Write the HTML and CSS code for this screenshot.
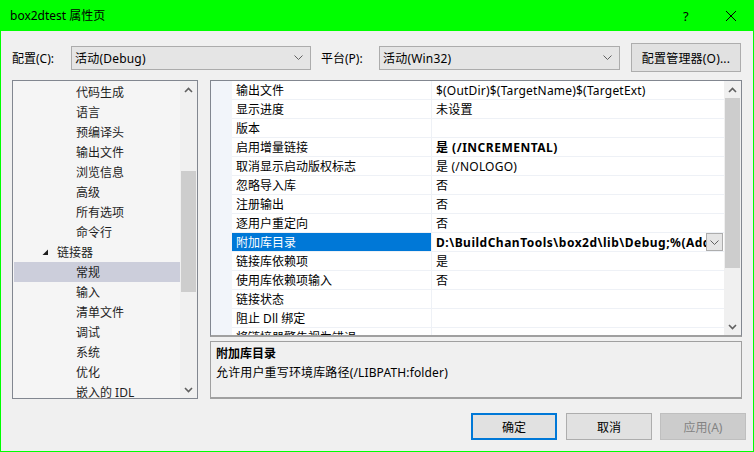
FILE: index.html
```html
<!DOCTYPE html>
<html lang="zh-CN">
<head>
<meta charset="utf-8">
<title>box2dtest 属性页</title>
<link rel="stylesheet" href="styles.css">
</head>
<body>
<div class="window">
  <div class="titlebar">
    <span class="title">box2dtest 属性页</span>
    <span class="help">?</span>
    <span class="close"><svg width="12" height="12" viewBox="0 0 12 12"><path d="M1 1L11 11M11 1L1 11" stroke="#000" stroke-width="1" fill="none"/></svg></span>
  </div>

  <div class="toolbar">
    <span class="label lab1">配置(C):</span>
    <div class="combo combo1"><span>活动(Debug)</span><svg class="chev" width="9" height="5" viewBox="0 0 9 5"><path d="M0.5 0.5L4.5 4.5L8.5 0.5" stroke="#606060" fill="none"/></svg></div>
    <span class="label lab2">平台(P):</span>
    <div class="combo combo2"><span>活动(Win32)</span><svg class="chev" width="9" height="5" viewBox="0 0 9 5"><path d="M0.5 0.5L4.5 4.5L8.5 0.5" stroke="#606060" fill="none"/></svg></div>
    <button class="btn mgr">配置管理器(O)...</button>
  </div>

  <div class="main">
    <div class="tree">
      <ul class="tree-list">
        <li class="child">代码生成</li>
        <li class="child">语言</li>
        <li class="child">预编译头</li>
        <li class="child">输出文件</li>
        <li class="child">浏览信息</li>
        <li class="child">高级</li>
        <li class="child">所有选项</li>
        <li class="child">命令行</li>
        <li class="parent"><svg class="expander" width="7" height="7" viewBox="0 0 7 7"><path d="M6 0.5V6H0.5Z" fill="#1e1e1e"/></svg>链接器</li>
        <li class="child selected">常规</li>
        <li class="child">输入</li>
        <li class="child">清单文件</li>
        <li class="child">调试</li>
        <li class="child">系统</li>
        <li class="child">优化</li>
        <li class="child">嵌入的 IDL</li>
      </ul>
      <div class="vscroll tree-scroll">
        <div class="sbtn"><svg width="9" height="6" viewBox="0 0 9 6"><path d="M1 5L4.5 1.5L8 5" stroke="#606060" stroke-width="1.6" fill="none"/></svg></div>
        <div class="gap-a"></div>
        <div class="thumb"></div>
        <div class="fill"></div>
        <div class="sbtn"><svg width="9" height="6" viewBox="0 0 9 6"><path d="M1 1L4.5 4.5L8 1" stroke="#606060" stroke-width="1.6" fill="none"/></svg></div>
      </div>
    </div>

    <div class="right">
      <div class="grid">
        <div class="grid-rows">
          <div class="row"><div class="gutter"></div><div class="name">输出文件</div><div class="val">$(OutDir)$(TargetName)$(TargetExt)</div></div>
          <div class="row"><div class="gutter"></div><div class="name">显示进度</div><div class="val">未设置</div></div>
          <div class="row"><div class="gutter"></div><div class="name">版本</div><div class="val"></div></div>
          <div class="row"><div class="gutter"></div><div class="name">启用增量链接</div><div class="val bold">是 (/INCREMENTAL)</div></div>
          <div class="row"><div class="gutter"></div><div class="name">取消显示启动版权标志</div><div class="val">是 (/NOLOGO)</div></div>
          <div class="row"><div class="gutter"></div><div class="name">忽略导入库</div><div class="val">否</div></div>
          <div class="row"><div class="gutter"></div><div class="name">注册输出</div><div class="val">否</div></div>
          <div class="row"><div class="gutter"></div><div class="name">逐用户重定向</div><div class="val">否</div></div>
          <div class="row active"><div class="gutter"></div><div class="name">附加库目录</div><div class="val bold"><span class="clip">D:\BuildChanTools\box2d\lib\Debug;%(AdditionalLibraryDirectories)</span><span class="ddbtn"><svg width="9" height="5" viewBox="0 0 9 5"><path d="M0.5 0.5L4.5 4.5L8.5 0.5" stroke="#606060" fill="none"/></svg></span></div></div>
          <div class="row"><div class="gutter"></div><div class="name">链接库依赖项</div><div class="val">是</div></div>
          <div class="row"><div class="gutter"></div><div class="name">使用库依赖项输入</div><div class="val">否</div></div>
          <div class="row"><div class="gutter"></div><div class="name">链接状态</div><div class="val"></div></div>
          <div class="row"><div class="gutter"></div><div class="name">阻止 Dll 绑定</div><div class="val"></div></div>
          <div class="row"><div class="gutter"></div><div class="name">将链接器警告视为错误</div><div class="val"></div></div>
        </div>
        <div class="vscroll grid-scroll">
          <div class="sbtn"><svg width="9" height="6" viewBox="0 0 9 6"><path d="M1 5L4.5 1.5L8 5" stroke="#606060" stroke-width="1.6" fill="none"/></svg></div>
          <div class="thumb"></div>
          <div class="fill"></div>
          <div class="sbtn"><svg width="9" height="6" viewBox="0 0 9 6"><path d="M1 1L4.5 4.5L8 1" stroke="#606060" stroke-width="1.6" fill="none"/></svg></div>
        </div>
      </div>
      <div class="desc">
        <div class="desc-title">附加库目录</div>
        <div class="desc-text">允许用户重写环境库路径(/LIBPATH:folder)</div>
      </div>
    </div>
  </div>

  <div class="actions">
    <button class="btn act default">确定</button>
    <button class="btn act">取消</button>
    <button class="btn act disabled">应用(A)</button>
  </div>
</div>
</body>
</html>
```

FILE: styles.css
```css
* { box-sizing: border-box; }
html, body { margin: 0; padding: 0; }
body {
  width: 754px;
  height: 452px;
  overflow: hidden;
  font-family: "Noto Sans", "Noto Sans CJK SC", sans-serif;
  font-size: 12px;
  color: #000;
}
.window {
  width: 754px;
  height: 452px;
  background: #f0f0f0;
  border: 1px solid #00ff00;
  border-top: 0;
  display: flex;
  flex-direction: column;
}
.titlebar {
  height: 31px;
  background: #00ff00;
  display: flex;
  align-items: center;
  flex: none;
}
.title {
  margin-left: 9px;
  font-size: 12px;
  line-height: 16px;
  flex: 1;
}
.help {
  font-size: 13px;
  width: 12px;
  margin-right: 30px;
}
.close {
  width: 12px;
  height: 12px;
  margin-right: 16px;
  display: flex;
}

.toolbar {
  display: flex;
  align-items: center;
  margin-top: 12px;
  padding-left: 11px;
  height: 29px;
  flex: none;
}
.label { line-height: 16px; padding-top: 2px; white-space: nowrap; }
.lab1 { width: 59px; }
.lab2 { width: 58px; margin-left: 10px; }
.combo {
  height: 24px;
  background: #e5e5e5;
  border: 1px solid #acacac;
  display: flex;
  align-items: center;
  padding-left: 3px;
  padding-right: 7px;
}
.combo span { flex: 1; line-height: 16px; padding-top: 2px; letter-spacing: 0.2px; }
.combo1 { width: 240px; }
.combo2 { width: 241px; }
.chev { display: block; }
.btn {
  font-family: inherit;
  font-size: 12px;
  color: #000;
  background: #e1e1e1;
  border: 1px solid #adadad;
  padding: 1px 0 0;
  margin: 0;
}
.mgr {
  width: 110px;
  height: 29px;
  margin-left: 11px;
  letter-spacing: 0.2px;
}

.main {
  display: flex;
  margin-top: 8px;
  padding-left: 11px;
  gap: 12px;
  height: 319px;
  flex: none;
}
.tree {
  width: 186px;
  height: 319px;
  border: 1px solid #828790;
  background: #f5f5f5;
  display: flex;
}
.tree-list {
  list-style: none;
  margin: 0;
  padding: 1px 0 0 0;
  width: 167px;
  overflow: hidden;
  color: #1e1e1e;
}
.tree-list li {
  height: 20px;
  line-height: 18px;
  padding-top: 2px;
  white-space: nowrap;
  display: flex;
  align-items: center;
}
.tree-list .child { padding-left: 63px; }
.tree-list .parent { padding-left: 29px; }
.tree-list .selected { background: #cccedb; margin-left: 1px; padding-left: 62px; }
.expander { margin-right: 8px; display: block; margin-top: -2px; }

.vscroll {
  width: 17px;
  background: #f0f0f0;
  display: flex;
  flex-direction: column;
  flex: none;
}
.sbtn {
  height: 17px;
  display: flex;
  align-items: center;
  justify-content: center;
  flex: none;
}
.thumb {
  background: #cdcdcd;
  margin: 0 1px;
  flex: none;
}
.fill { flex: 1; }
.tree-scroll .gap-a { height: 73px; flex: none; }
.tree-scroll .thumb { height: 121px; }

.right {
  width: 532px;
  display: flex;
  flex-direction: column;
}
.grid {
  height: 257px;
  border: 1px solid #828790;
  border-bottom: 2px solid #a0a0a0;
  background: #fff;
  display: flex;
  flex: none;
}
.grid-rows {
  flex: 1;
  overflow: hidden;
}
.row {
  display: flex;
  height: 19px;
}
.gutter {
  width: 21px;
  background: #f2f5fa;
  flex: none;
}
.name, .val {
  height: 19px;
  border-bottom: 1px solid #eef1f6;
  line-height: 17px;
  padding-top: 1px;
  white-space: nowrap;
  overflow: hidden;
}
.name {
  width: 200px;
  flex: none;
  padding-left: 4px;
  border-right: 1px solid #eef1f6;
}
.val {
  flex: 1;
  padding-left: 4px;
  display: flex;
  align-items: flex-start;
  letter-spacing: 0.2px;
}
.val.bold { font-weight: bold; letter-spacing: 0.5px; }
.row.active .name {
  background: #0078d7;
  color: #fff;
}
.clip {
  flex: 1;
  overflow: hidden;
  white-space: nowrap;
}
.ddbtn {
  width: 17px;
  height: 18px;
  margin-top: -1px;
  border: 1px solid #adadad;
  background: #e5e5e5;
  display: flex;
  align-items: center;
  justify-content: center;
  flex: none;
  margin-right: 1px;
}
.grid-scroll .thumb { height: 170px; }

.desc {
  margin-top: 4px;
  height: 58px;
  border: 1px solid #a0a0a0;
  border-bottom-width: 2px;
  background: #f0f0f0;
  padding: 2px 5px 0;
}
.desc-title { font-weight: bold; line-height: 19px; }
.desc-text { line-height: 19px; letter-spacing: 0.15px; }

.actions {
  display: flex;
  justify-content: flex-end;
  margin-top: 14px;
  padding-right: 7px;
  gap: 9px;
}
.act {
  width: 86px;
  height: 27px;
}
.act.default { border: 2px solid #0078d7; }
.act.disabled {
  background: #cccccc;
  border-color: #bfbfbf;
  color: #838383;
  margin-left: -1px;
}
```
